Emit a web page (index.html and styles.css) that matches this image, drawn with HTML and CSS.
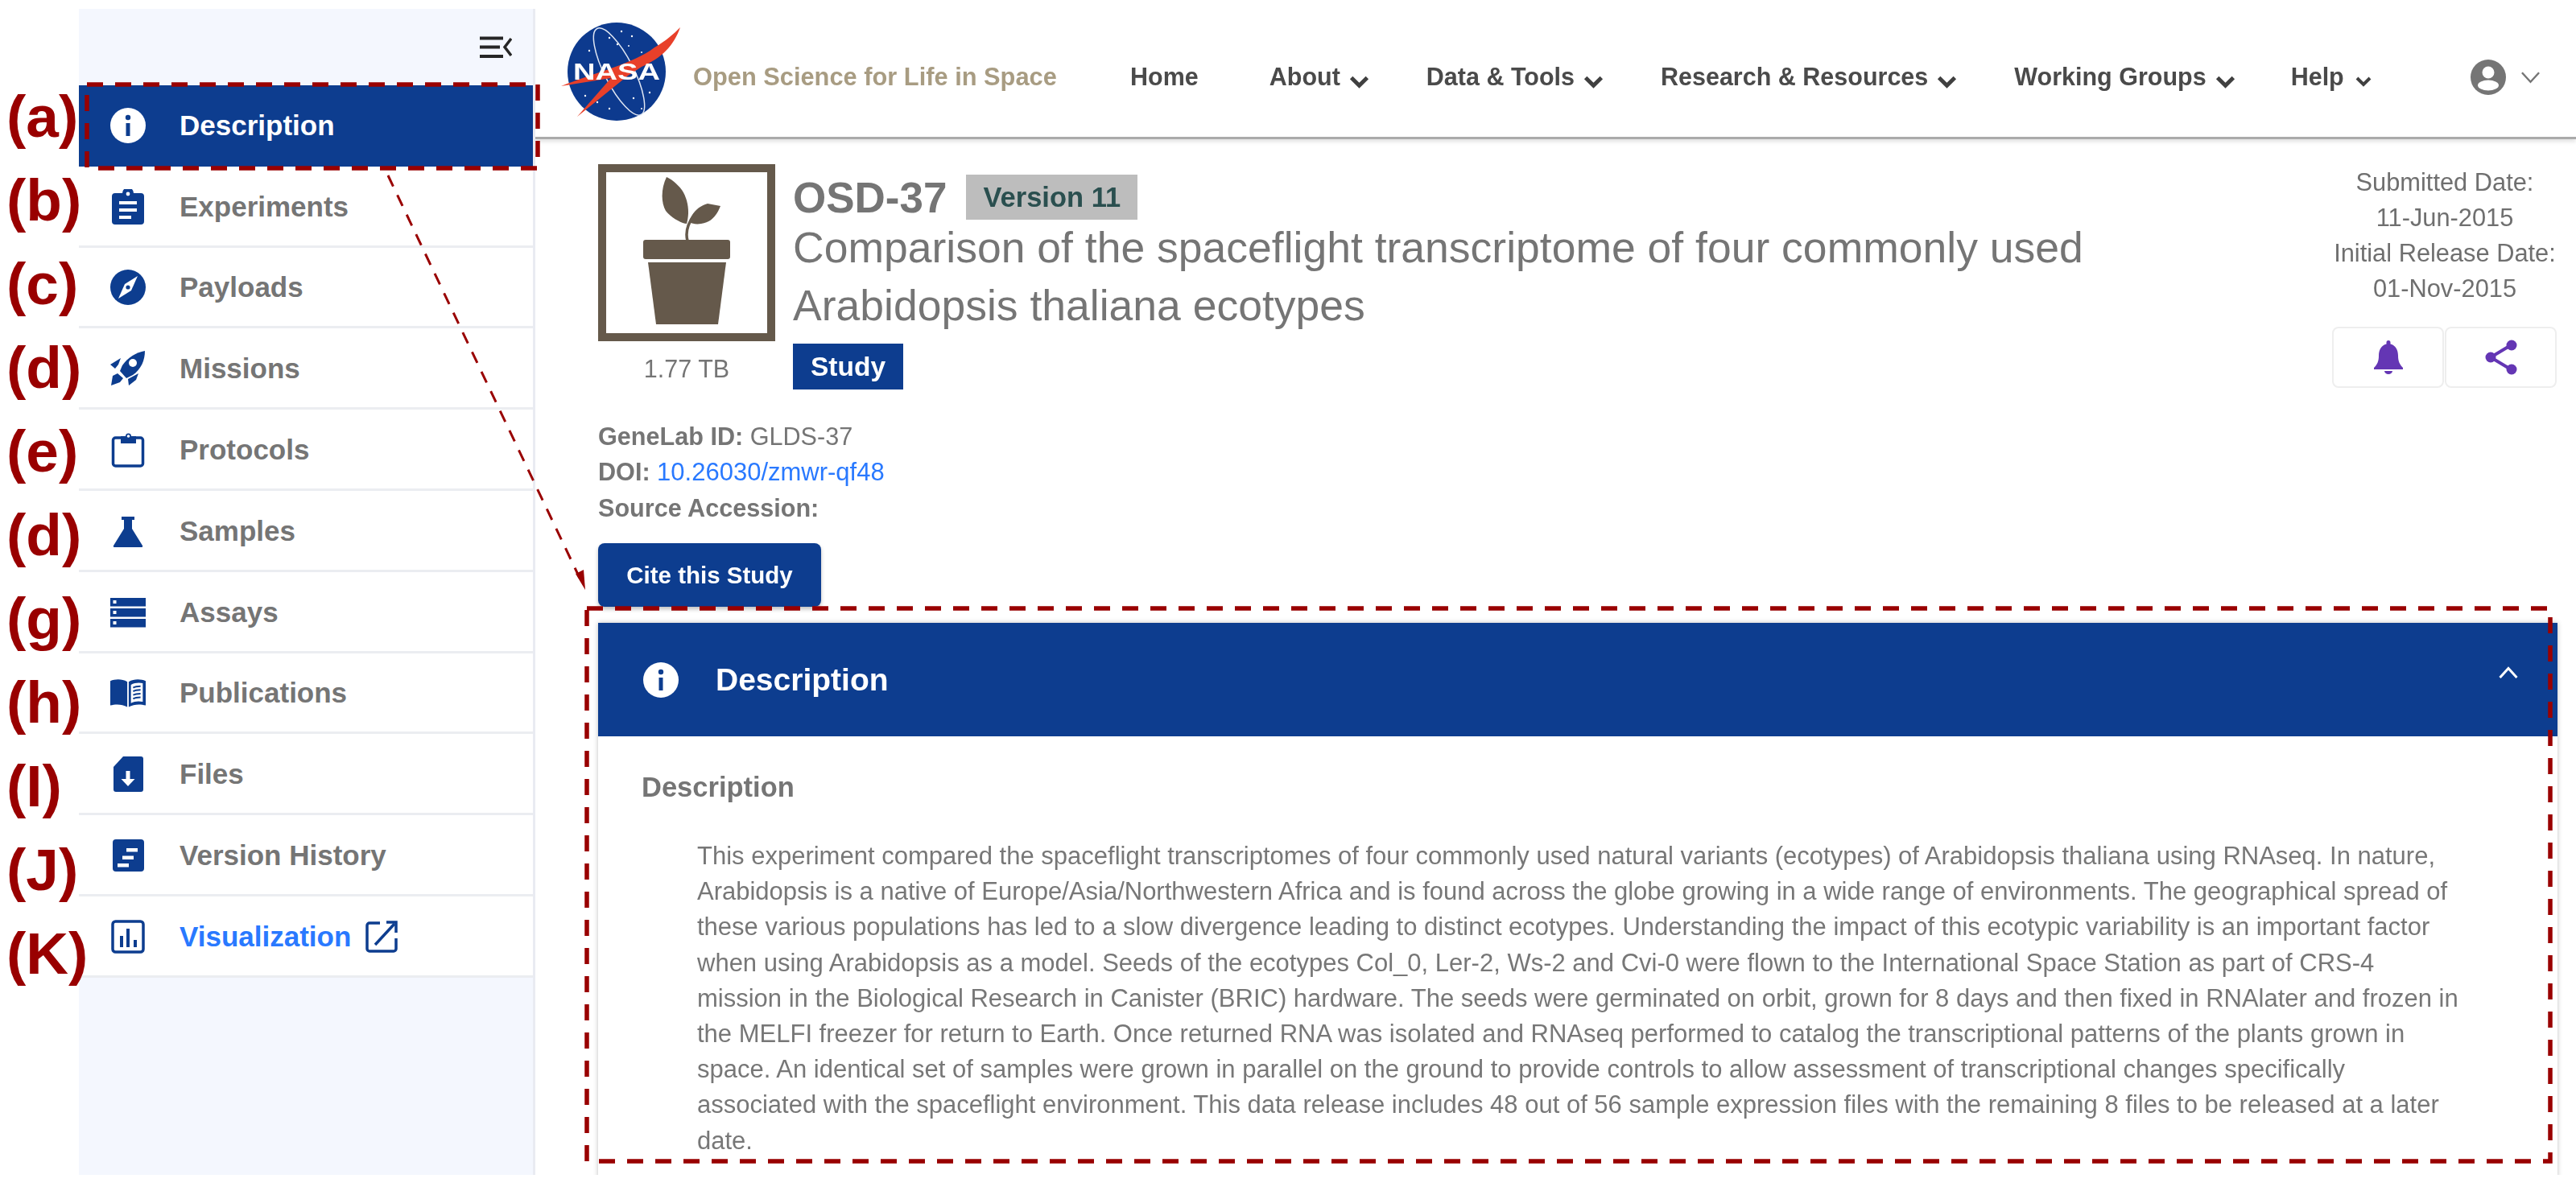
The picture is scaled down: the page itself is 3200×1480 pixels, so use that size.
FILE: index.html
```html
<!DOCTYPE html>
<html lang="en">
<head>
<meta charset="utf-8">
<title>OSD-37</title>
<link rel="stylesheet" href="styles.css">
</head>
<body>
<div class="page">
  <aside class="sidebar">
    <div class="side-top">
      <svg class="menu-icon" viewBox="0 0 40 27"><path d="M0 2.5h29M0 13.5h25M0 25h29" stroke="#262626" stroke-width="4" fill="none"/><path d="M39 3 31 13.5 39 24" stroke="#262626" stroke-width="3.5" fill="none"/></svg>
    </div>
    <a class="item active">
      <svg class="ico" viewBox="0 0 44 44"><circle cx="22" cy="22" r="22" fill="#fff"/><circle cx="22" cy="12" r="3.2" fill="#0d3d8f"/><rect x="19.5" y="19" width="5" height="16" fill="#0d3d8f"/></svg>
      <span>Description</span>
    </a>
    <a class="item">
      <svg class="ico" viewBox="0 0 44 44"><path d="M6 5h9a7 7 0 0 1 14 0h9a4 4 0 0 1 4 4v31a4 4 0 0 1-4 4H6a4 4 0 0 1-4-4V9a4 4 0 0 1 4-4z" fill="#0d3d8f"/><circle cx="22" cy="6" r="2.4" fill="#fff"/><path d="M11 17h22M11 26h22M11 35h15" stroke="#fff" stroke-width="4"/></svg>
      <span>Experiments</span>
    </a>
    <a class="item">
      <svg class="ico" viewBox="0 0 44 44"><circle cx="22" cy="22" r="22" fill="#0d3d8f"/><path d="M34 8 26 26 10 36 18 18z" fill="#fff"/><circle cx="22" cy="22" r="2.6" fill="#0d3d8f"/></svg>
      <span>Payloads</span>
    </a>
    <a class="item">
      <svg class="ico" viewBox="0 0 44 44"><path d="M43 0C32 2 22 8 15 18l-3 7 8 9 8-4C38 23 43 12 43 0z" fill="#0d3d8f"/><circle cx="28" cy="15" r="5" fill="#fff"/><path d="M13 9 0 17l6 5 4-5zM1 43l2-12 6-3 7 6-4 5zM23 43l-1-8 13-7-3 8z" fill="#0d3d8f"/></svg>
      <span>Missions</span>
    </a>
    <a class="item">
      <svg class="ico" viewBox="0 0 44 44"><rect x="3.5" y="7" width="37" height="35" rx="3" fill="none" stroke="#0d3d8f" stroke-width="3.5"/><path d="M13 5h6a3.5 3.5 0 0 1 7 0h6v9H13z" fill="#0d3d8f"/><circle cx="22.500" cy="5" r="1.800" fill="#fff"/></svg>
      <span>Protocols</span>
    </a>
    <a class="item">
      <svg class="ico" viewBox="0 0 44 44"><path d="M14 4h16v4h-3v11l13 21q1 2-2 2H6q-3 0-2-2l13-21V8h-3z" fill="#0d3d8f"/></svg>
      <span>Samples</span>
    </a>
    <a class="item">
      <svg class="ico" viewBox="0 0 44 44"><rect y="4" width="44" height="10.500" fill="#0d3d8f"/><rect y="17" width="44" height="10.500" fill="#0d3d8f"/><rect y="30" width="44" height="10.500" fill="#0d3d8f"/><rect x="3.500" y="7" width="4" height="4" fill="#fff"/><rect x="3.500" y="20" width="4" height="4" fill="#fff"/><rect x="3.500" y="33" width="4" height="4" fill="#fff"/></svg>
      <span>Assays</span>
    </a>
    <a class="item">
      <svg class="ico ico-book" viewBox="0 0 48 38"><path d="M0 3C7 0 16 0 23 4v34c-7-4-16-4-23-2zM25 4c7-4 16-4 23-1v33c-7-2-16-2-23 2z" fill="#0d3d8f"/><path d="M28 8c5-3 12-3 16-2v25c-5-1-11-1-16 2z" fill="#fff"/><path d="M31 12c3-2 7-2 10-2M31 17c3-2 7-2 10-2M31 22c3-2 7-2 10-2M31 27c3-2 7-2 10-2" stroke="#0d3d8f" stroke-width="2.200" fill="none"/></svg>
      <span>Publications</span>
    </a>
    <a class="item">
      <svg class="ico" viewBox="0 0 44 44"><path d="M16 0h22a3 3 0 0 1 3 3v38a3 3 0 0 1-3 3H7a3 3 0 0 1-3-3V13z" fill="#0d3d8f"/><path d="M19.500 18h5v10h6L22 37l-8.500-9h6z" fill="#fff"/></svg>
      <span>Files</span>
    </a>
    <a class="item">
      <svg class="ico" viewBox="0 0 44 44"><rect x="3" y="2" width="39" height="40" rx="4" fill="#0d3d8f"/><path d="M20 13h14v4.500H20zM15 22.500h14V27H15zM9 32h14v4.500H9z" fill="#fff"/></svg>
      <span>Version History</span>
    </a>
    <a class="item">
      <svg class="ico" viewBox="0 0 44 44"><rect x="3" y="3" width="38" height="38" rx="3.500" fill="none" stroke="#0d3d8f" stroke-width="3.500"/><path d="M12 21h4v14h-4zM20 12h4v23h-4zM29 26h4v9h-4z" fill="#0d3d8f"/></svg>
      <span class="viz">Visualization</span>
      <svg class="ext" viewBox="0 0 40 40"><path d="M18 3H5a3 3 0 0 0-3 3v29a3 3 0 0 0 3 3h30a3 3 0 0 0 3-3V22" fill="none" stroke="#0d3d8f" stroke-width="3.500"/><path d="M26 2h12v13" fill="none" stroke="#0d3d8f" stroke-width="3.500"/><path d="M36 4 12 30" stroke="#0d3d8f" stroke-width="3.500"/></svg>
    </a>
  </aside>

  <main class="main">
    <header class="topbar">
      <svg class="logo" viewBox="0 0 150 124">
        <ellipse cx="69" cy="62" rx="61" ry="61" fill="#0d3a8e"/>
        <g fill="#fff"><circle cx="60" cy="20" r="1.200"/><circle cx="75" cy="12" r="1.200"/><circle cx="88" cy="18" r="1.200"/><circle cx="70" cy="28" r="1.200"/><circle cx="84" cy="30" r="1"/><circle cx="35" cy="36" r="1.200"/><circle cx="100" cy="38" r="1"/><circle cx="30" cy="92" r="1.200"/><circle cx="45" cy="100" r="1.200"/><circle cx="60" cy="108" r="1.200"/><circle cx="100" cy="108" r="1"/><circle cx="110" cy="88" r="1.200"/><circle cx="118" cy="100" r="1"/><circle cx="90" cy="95" r="1.200"/></g>
        <ellipse cx="72" cy="62" rx="18" ry="60" transform="rotate(-27 72 62)" fill="none" stroke="#dfe6f3" stroke-width="1.500"/>
        <path d="M0 80C40 64 90 52 116 32 130 24 140 15 148 7 140 30 125 45 100 56L83 67 20 118 62 70z" fill="#e8402a"/>
        <text class="logo-text" x="15" y="72" textLength="108" lengthAdjust="spacingAndGlyphs">NASA</text>
      </svg>
      <span class="tagline">Open Science for Life in Space</span>
      <nav class="nav">
        <a class="nav-item home">Home</a>
        <a class="nav-item">About<svg class="caret" viewBox="0 0 20 13"><path d="M2 2l8 8 8-8" fill="none" stroke="#404040" stroke-width="4"/></svg></a>
        <a class="nav-item">Data &amp; Tools<svg class="caret" viewBox="0 0 20 13"><path d="M2 2l8 8 8-8" fill="none" stroke="#404040" stroke-width="4"/></svg></a>
        <a class="nav-item">Research &amp; Resources<svg class="caret" viewBox="0 0 20 13"><path d="M2 2l8 8 8-8" fill="none" stroke="#404040" stroke-width="4"/></svg></a>
        <a class="nav-item">Working Groups<svg class="caret" viewBox="0 0 20 13"><path d="M2 2l8 8 8-8" fill="none" stroke="#404040" stroke-width="4"/></svg></a>
        <a class="nav-item help">Help<svg class="caret" viewBox="0 0 20 13"><path d="M2 2l8 8 8-8" fill="none" stroke="#404040" stroke-width="4"/></svg></a>
      </nav>
      <div class="account">
        <svg class="user" viewBox="0 0 44 44"><circle cx="22" cy="22" r="22" fill="#757575"/><circle cx="22" cy="16" r="7.500" fill="#fff"/><ellipse cx="22" cy="32" rx="13" ry="6.500" fill="#fff"/></svg>
        <svg class="user-caret" viewBox="0 0 26 16"><path d="M2 2l11 12L24 2" fill="none" stroke="#757575" stroke-width="2.500"/></svg>
      </div>
    </header>

    <div class="content">
      <section class="study">
        <div class="thumb-col">
          <svg class="thumb" viewBox="0 0 220 220">
            <rect x="5" y="5" width="210" height="210" fill="#fff" stroke="#65594b" stroke-width="10"/>
            <path d="M85 16C78 30 78 48 84 58 90 66 104 74 110 74 114 60 112 44 104 32 98 24 90 18 85 16z" fill="#65594b"/>
            <path d="M113 72C116 62 124 52 136 49L152 52C148 62 142 72 128 74 122 75 117 74 113 72z" fill="#65594b"/>
            <path d="M111 95C108 84 111 74 120 62" fill="none" stroke="#65594b" stroke-width="3.500"/>
            <rect x="56" y="94" width="108" height="24" rx="3" fill="#65594b"/>
            <path d="M62 122H159L149 199H72z" fill="#65594b"/>
          </svg>
          <div class="size">1.77 TB</div>
        </div>
        <div class="title-col">
          <div class="title-row">
            <h1 class="osd">OSD-37</h1>
            <span class="version">Version 11</span>
          </div>
          <h2 class="study-title">Comparison of the spaceflight transcriptome of four commonly used<br>Arabidopsis thaliana ecotypes</h2>
          <span class="type-tag">Study</span>
        </div>
        <div class="date-col">
          <div class="dates">Submitted Date:<br>11-Jun-2015<br>Initial Release Date:<br>01-Nov-2015</div>
          <div class="actions">
            <button class="act">
              <svg class="bell" viewBox="0 0 36 42"><path d="M18 0a2.500 2.500 0 0 1 2.500 2.500v2C27 6 30 12 30 19c0 7 2 11 6 15v2H0v-2c4-4 6-8 6-15 0-7 3-13 9.500-14.500v-2A2.500 2.500 0 0 1 18 0z" fill="#6436b4"/><path d="M13 38h10a5 4 0 0 1-10 0z" fill="#6436b4"/></svg>
            </button>
            <button class="act">
              <svg class="share" viewBox="0 0 40 44"><path d="M32 7 7 22l25 15" fill="none" stroke="#6436b4" stroke-width="4"/><circle cx="33" cy="7" r="6.500" fill="#6436b4"/><circle cx="7" cy="22" r="6.500" fill="#6436b4"/><circle cx="33" cy="37" r="6.500" fill="#6436b4"/></svg>
            </button>
          </div>
        </div>
      </section>

      <div class="meta">
        <div><b>GeneLab ID:</b> GLDS-37</div>
        <div><b>DOI:</b> <a class="link">10.26030/zmwr-qf48</a></div>
        <div><b>Source Accession:</b></div>
      </div>
      <button class="cite">Cite this Study</button>

      <section class="panel">
        <div class="panel-head">
          <svg class="panel-ico" viewBox="0 0 44 44"><circle cx="22" cy="22" r="22" fill="#fff"/><circle cx="22" cy="12" r="3.200" fill="#0d3d8f"/><rect x="19.500" y="19" width="5" height="16" fill="#0d3d8f"/></svg>
          <span class="panel-title">Description</span>
          <svg class="panel-caret" viewBox="0 0 24 16"><path d="M1.500 14 12 2.500 22.500 14" fill="none" stroke="#fff" stroke-width="3"/></svg>
        </div>
        <div class="panel-body">
          <h3 class="label">Description</h3>
          <p class="para">This experiment compared the spaceflight transcriptomes of four commonly used natural variants (ecotypes) of Arabidopsis thaliana using RNAseq. In nature,<br>Arabidopsis is a native of Europe/Asia/Northwestern Africa and is found across the globe growing in a wide range of environments. The geographical spread of<br>these various populations has led to a slow divergence leading to distinct ecotypes. Understanding the impact of this ecotypic variability is an important factor<br>when using Arabidopsis as a model. Seeds of the ecotypes Col_0, Ler-2, Ws-2 and Cvi-0 were flown to the International Space Station as part of CRS-4<br>mission in the Biological Research in Canister (BRIC) hardware. The seeds were germinated on orbit, grown for 8 days and then fixed in RNAlater and frozen in<br>the MELFI freezer for return to Earth. Once returned RNA was isolated and RNAseq performed to catalog the transcriptional patterns of the plants grown in<br>space. An identical set of samples were grown in parallel on the ground to provide controls to allow assessment of transcriptional changes specifically<br>associated with the spaceflight environment. This data release includes 48 out of 56 sample expression files with the remaining 8 files to be released at a later<br>date.</p>
        </div>
      </section>
    </div>
  </main>
</div>

<div class="labels">
  <span>(a)</span><span>(b)</span><span>(c)</span><span>(d)</span><span>(e)</span><span>(d)</span><span>(g)</span><span>(h)</span><span>(I)</span><span>(J)</span><span>(K)</span>
</div>

<svg class="overlay" viewBox="0 0 3200 1480">
  <rect class="dash" x="108" y="105" width="560" height="104"/>
  <rect class="dash" x="729" y="756" width="2439" height="687"/>
  <path class="arrow" d="M482 218 720 718"/>
  <path class="head" d="M727 733 715 713 725 708z"/>
</svg>
</body>
</html>
```
FILE: styles.css
```css
* { box-sizing: border-box; }
html, body { margin: 0; padding: 0; background: #fff; }
body { width: 3200px; height: 1480px; overflow: hidden; position: relative; font-family: "Liberation Sans", Arial, sans-serif; color: #757575; }
h1, h2, h3, p { margin: 0; }
.page { display: flex; margin: 11px 0 0 98px; height: 1449px; filter: blur(0.6px); }

.sidebar { width: 567px; flex: none; background: #f4f7fe; border-right: 3px solid #e9ebf2; }
.side-top { height: 95px; position: relative; display: flex; justify-content: flex-end; padding: 34px 26px 0 0; }
.menu-icon { width: 40px; height: 27px; }
.item { height: 100.800px; background: #fff; border-bottom: 3px solid #ebedf1; padding-top: 2px; display: flex; align-items: center; gap: 42px; padding-left: 39px; font-size: 35px; font-weight: 700; color: #757575; }
.item.active { background: #0d3d8f; color: #fff; border-bottom: 0; padding-top: 0; }
.ico { width: 44px; height: 44px; flex: none; }
.ico-book { height: 38px; }
.viz { color: #2979ff; margin-right: -24px; }
.ext { width: 40px; height: 40px; }

.main { flex: 1; min-width: 0; display: flex; flex-direction: column; overflow: hidden; }
.topbar { height: 162px; flex: none; display: flex; align-items: center; padding-top: 10px; border-bottom: 3px solid #aaa; box-shadow: 0 3px 5px rgba(0,0,0,.12); position: relative; z-index: 1; background: #fff; }
.logo { width: 150px; height: 124px; margin: -14px 14px 0 32px; flex: none; }
.logo-text { fill: #fff; font-size: 30px; font-weight: 700; }
.tagline { width: 450px; font-size: 30.800px; font-weight: 700; color: #a89c82; white-space: nowrap; flex: none; }
.nav { display: flex; align-items: center; gap: 71px; margin-left: 93px; }
.nav-item { font-size: 30.500px; font-weight: 700; color: #4a4a4a; display: flex; align-items: center; white-space: nowrap; }
.home { margin-right: 17px; }
.help { margin-left: -2px; }
.caret { width: 25px; height: 16px; margin: 12px 0 0 11px; }
.help .caret { width: 20px; height: 13px; margin-left: 14px; }
.account { margin-left: auto; margin-right: 44px; display: flex; align-items: center; gap: 18px; }
.user { width: 44px; height: 44px; }
.user-caret { width: 25px; height: 16px; }

.content { padding: 31px 23px 0 78px; flex: 1; }
.study { display: flex; height: 280px; }
.thumb-col { width: 220px; flex: none; text-align: center; }
.thumb { width: 220px; height: 220px; display: block; }
.size { font-size: 30.500px; line-height: 44px; margin-top: 12px; }
.title-col { margin-left: 22px; padding-top: 13px; flex: 1; }
.title-row { display: flex; align-items: center; gap: 24px; height: 56px; }
.osd { font-size: 53px; font-weight: 700; }
.version { background: #bdbdbd; color: #2a4f4f; font-size: 34.500px; font-weight: 700; height: 56px; line-height: 56px; padding: 0 21px; }
.study-title { font-size: 53.500px; font-weight: 400; line-height: 72px; white-space: nowrap; margin-top: -1px; }
.type-tag { display: inline-block; margin-top: 11px; background: #0d3d8f; color: #fff; font-size: 33.500px; font-weight: 700; height: 57px; line-height: 57px; padding: 0 22px; }
.date-col { width: 280px; flex: none; margin-top: 1px; }
.dates { font-size: 30.800px; line-height: 44px; text-align: center; color: #6f6f6f; }
.actions { display: flex; gap: 1px; margin-top: 25px; }
.act { width: 139px; height: 76px; background: #fff; border: 2px solid #eee; border-radius: 8px; padding: 0; display: flex; align-items: center; justify-content: center; }
.bell { width: 36px; height: 42px; }
.share { width: 40px; height: 44px; }

.meta { margin-top: 36px; font-size: 30.600px; line-height: 44px; color: #757575; }
.link { color: #2979ff; font-size: 31px; }
.cite { display: block; margin-top: 22px; width: 277px; height: 79px; background: #0d3d8f; color: #fff; border: 0; border-radius: 8px; font: 700 29.500px "Liberation Sans", Arial, sans-serif; box-shadow: 0 3px 5px rgba(0,0,0,.25); }

.panel { margin-top: 20px; box-shadow: 0 0 6px rgba(0,0,0,.25); height: 720px; background: #fff; }
.panel-head { height: 141px; background: #0d3d8f; display: flex; align-items: center; padding: 0 49px 0 56px; color: #fff; }
.panel-ico { width: 44px; height: 44px; flex: none; }
.panel-title { margin-left: 46px; font-size: 39px; font-weight: 700; }
.panel-caret { width: 24px; height: 16px; margin-left: auto; margin-top: -18px; }
.panel-body { padding: 41px 0 0 54px; }
.label { font-size: 34.500px; font-weight: 700; line-height: 44px; color: #757575; }
.para { margin: 42px 0 0 69px; font-size: 31px; line-height: 44.200px; white-space: nowrap; color: #777; }

.labels { position: absolute; left: 8px; top: 93px; display: flex; flex-direction: column; font-size: 73px; font-weight: 700; color: #990000; line-height: 104px; }
.labels span { height: 104px; }
.overlay { position: absolute; left: 0; top: 0; width: 3200px; height: 1480px; pointer-events: none; }
.dash { fill: none; stroke: #990000; stroke-width: 5.500; stroke-dasharray: 20 15; }
.arrow { fill: none; stroke: #990000; stroke-width: 3; stroke-dasharray: 15 12; }
.head { fill: #990000; }
```
